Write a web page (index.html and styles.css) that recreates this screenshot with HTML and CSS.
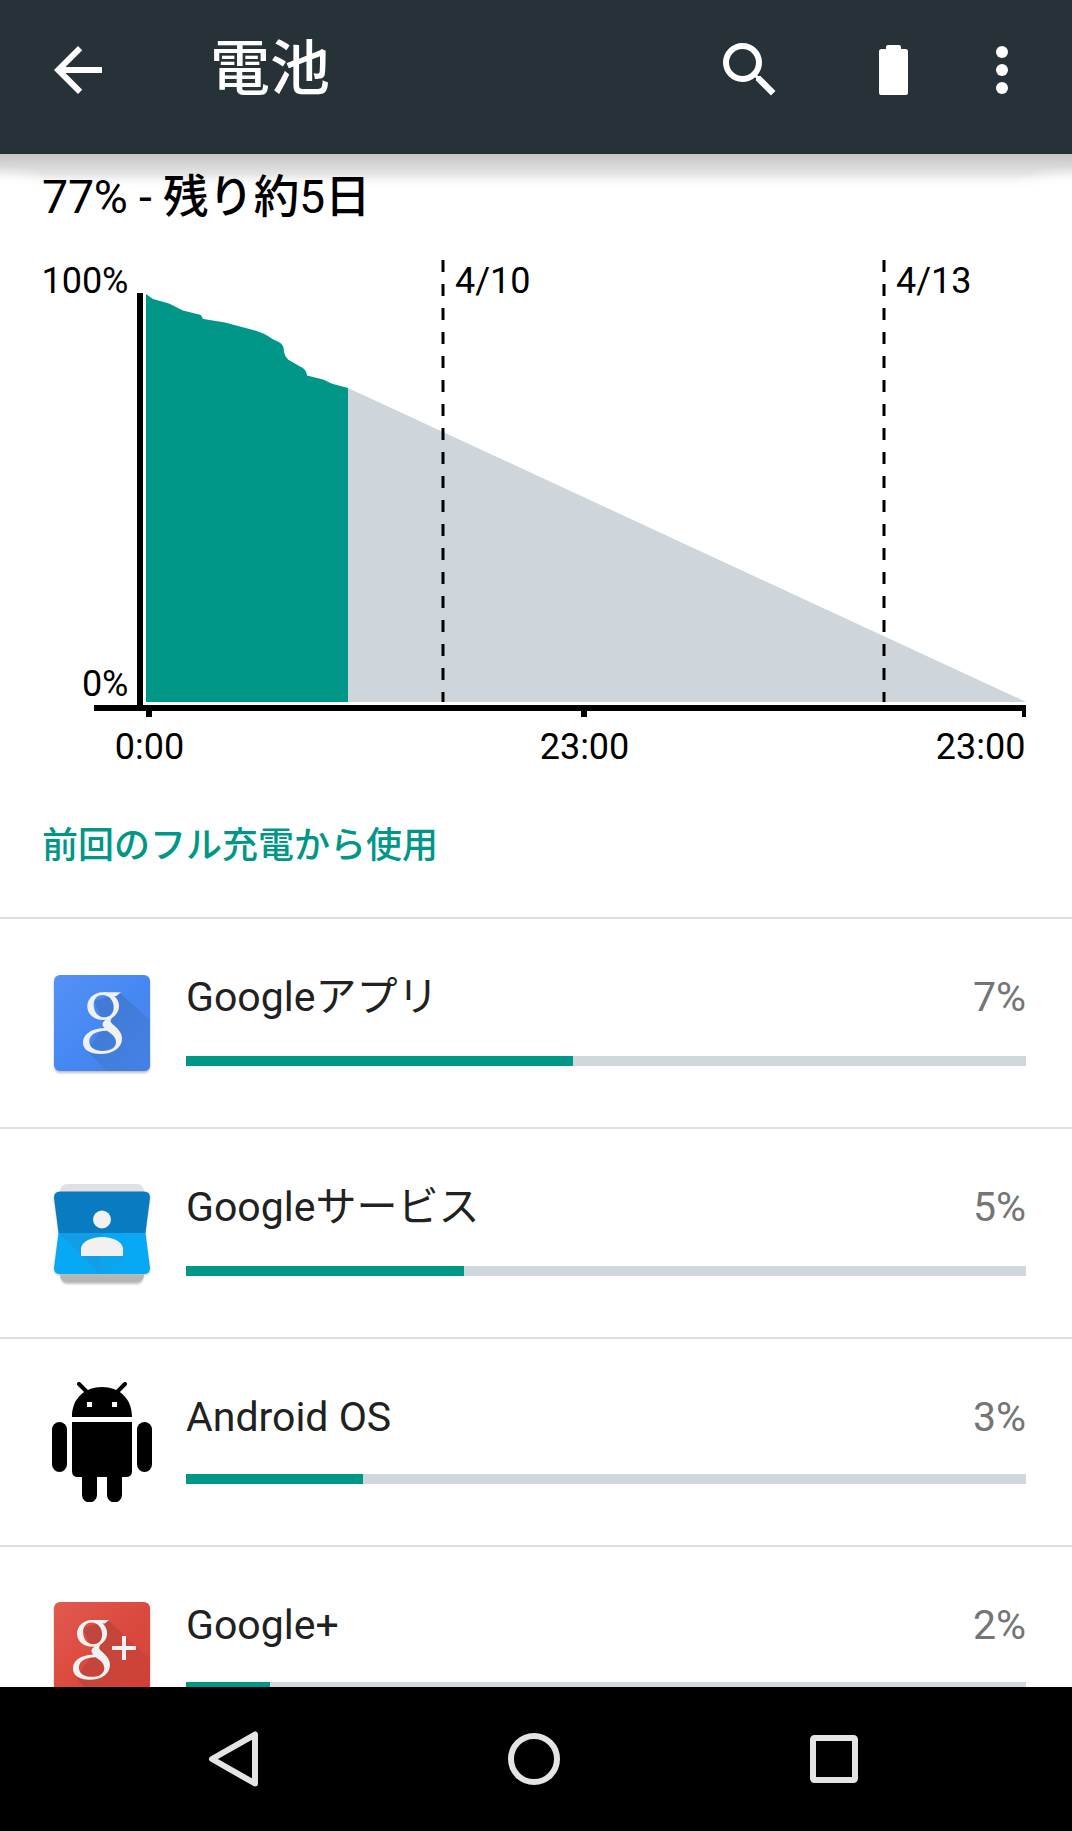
FILE: index.html
```html
<!DOCTYPE html>
<html lang="ja">
<head>
<meta charset="utf-8">
<title>電池</title>
<link rel="stylesheet" href="styles.css">
</head>
<body>
<div class="screen">
  <header class="app-bar">
    <svg class="icon back" viewBox="0 0 24 24"><path d="M20 11H7.83l5.59-5.59L12 4l-8 8 8 8 1.41-1.41L7.83 13H20z"/></svg>
    <h1 class="title">電池</h1>
    <svg class="icon search" viewBox="0 0 24 24"><path d="M15.5 14h-.79l-.28-.27A6.47 6.47 0 0 0 16 9.500 6.500 6.500 0 1 0 9.500 16c1.610 0 3.090-.59 4.230-1.570l.27.28v.79l5 4.990L20.490 19zm-6 0a4.500 4.500 0 1 1 0-9 4.500 4.500 0 0 1 0 9z"/></svg>
    <svg class="icon battery" viewBox="0 0 72 72"><path d="M45.500 15H44v-2a2 2 0 0 0-2-2H31a2 2 0 0 0-2 2v2h-4.500a2.500 2.500 0 0 0-2.500 2.500V59a2 2 0 0 0 2 2h25a2 2 0 0 0 2-2V17.500a2.500 2.500 0 0 0-2.500-2.500z"/></svg>
    <svg class="icon more" viewBox="0 0 24 24"><circle cx="12" cy="6" r="2"/><circle cx="12" cy="12" r="2"/><circle cx="12" cy="18" r="2"/></svg>
  </header>
  <main class="content">
    <p class="summary">77% - <span class="jp">残り約</span>5<span class="jp">日</span></p>
    <svg class="chart" viewBox="0 240 1072 540">
      <path class="projected" d="M348 388L1026 702H348z"/>
      <path class="used" d="M146 294l7 5 16 4.500c5 2 9 5 14 7l17 4.200c2 .5 2 4 3.500 4.300l21.500 3.500 30 8q8 2.500 12 5c4 3 9 5 12.500 7s4.500 5 4.500 9.500q1 5 4 7.500l12 7c5 2 6.500 5 7 9l16 4c4 1.500 6 3 10 4.500L348 388V702H146z"/>
      <path class="axis" d="M137 293h6v412h883v12h-4v-6H587v6h-6v-6H152v6h-6v-6H94v-6h43z"/>
      <path class="day" d="M443 260V702M884 260V702"/>
      <g class="labels">
        <text x="128.500" y="293" text-anchor="end">100%</text>
        <text x="128.500" y="696" text-anchor="end">0%</text>
        <text x="455" y="293">4/10</text>
        <text x="896" y="293">4/13</text>
        <text x="149.500" y="759" text-anchor="middle">0:00</text>
        <text x="584.500" y="759" text-anchor="middle">23:00</text>
        <text x="1025.500" y="759" text-anchor="end">23:00</text>
      </g>
    </svg>
    <h2 class="section">前回のフル充電から使用</h2>
    <ul class="apps">
      <li class="app">
        <svg class="app-icon" viewBox="0 0 120 120">
          <defs>
            <linearGradient id="blue" x2="1" y2="1"><stop stop-color="#5591f5"/><stop offset=".5" stop-color="#4688f4"/><stop offset="1" stop-color="#4481e6"/></linearGradient>
            <linearGradient id="blue-shadow" x2="1" y2="1"><stop offset=".3" stop-color="#417bd6"/><stop offset=".9" stop-color="#4481e6"/></linearGradient>
          </defs>
          <rect class="shade" x="12" y="14" width="96" height="96" rx="6"/>
          <rect x="12" y="12" width="96" height="96" rx="6" fill="url(#blue)"/>
          <path d="M78 30L108 57v45q0 6-6 6H65L45 88 62 62 52 38z" fill="url(#blue-shadow)"/>
          <g id="g" fill="#f1f1f1" fill-rule="evenodd">
            <path d="M61 29.300c9.500 0 16 6 16 13.500S71 57 61.500 57 45.300 51 45.300 43.500 51.500 29.300 61 29.300zM60.500 32c-5.500 0-8.800 4-8.800 10 0 7 4.300 12.300 10.300 12.300 6.300 0 9.700-4 9.700-10C71.700 37.500 67 32 60.500 32z"/>
            <path d="M61 29.300H79L74.500 33H69z"/>
            <path d="M62.500 65C48 65.500 41 72 41 79.500 41 87 48 91 58.500 91 71 91 80 85 80 75.500 80 69 75 65 71 61.500c-3-2.500-3-4-1-6.500l-6 1.500c-4 2.500-4.500 5.500-1.500 8.500zM65 67.700C52 67.700 47.300 73 47.300 78.500 47.300 84.500 53 88 60.500 88 69 88 74 84.500 74 79c0-5-4-8-9-11.300z"/>
          </g>
        </svg>
        <div class="body">
          <div class="line"><span class="name">Googleアプリ</span><span class="pct">7%</span></div>
          <div class="bar"><div class="fill" style="width:46.070%"></div></div>
        </div>
      </li>
      <li class="app">
        <svg class="app-icon" viewBox="0 0 120 120">
          <rect class="shade" x="19" y="15" width="82" height="96" rx="6"/>
          <rect x="18" y="11" width="84" height="50" rx="7" fill="#e1e1e1"/>
          <rect x="18" y="60" width="84" height="49" rx="7" fill="#b5b5b5"/>
          <path class="shade" d="M18 20h84q6 0 6 6l-5 34 5 36q0 6-6 6H18q-6 0-6-6l5-36-5-34q0-6 6-6z"/>
          <path d="M18 18.500h84q6 0 6 6L103.500 60h-87L12 24.500q0-6 6-6z" fill="#087bc1"/>
          <path d="M16.500 60h87l4.500 35q0 6-6 6H18q-6 0-6-6z" fill="#08a9f4"/>
          <path d="M16.500 60H60v41h-2z" fill="#119ee6"/>
          <path d="M58 83h27L62 101h-4z" fill="#0ba4ed"/>
          <circle cx="60" cy="46.500" r="9" fill="#f1f1f1"/>
          <path d="M39 83V76c0-8 12-12 21-12s21 4 21 12v7z" fill="#f1f1f1"/>
        </svg>
        <div class="body">
          <div class="line"><span class="name">Googleサービス</span><span class="pct">5%</span></div>
          <div class="bar"><div class="fill" style="width:33.100%"></div></div>
        </div>
      </li>
      <li class="app compact">
        <svg class="app-icon" viewBox="0 0 120 120">
          <path d="M30 35C30 16 43 5 60 5s30 11 30 30zM30 40h60v49q0 6-6 6H80v18a7.500 7.500 0 0 1-15 0V95H55v18a7.500 7.500 0 0 1-15 0V95h-4q-6 0-6-6z"/>
          <rect x="10" y="40" width="15" height="50" rx="7.500"/>
          <rect x="95" y="40" width="15" height="50" rx="7.500"/>
          <path class="antenna" d="M37 2l9 9M83 2l-9 9"/>
          <path d="M45 20h5v5h-5zM70 20h5v5h-5z" fill="#fff"/>
        </svg>
        <div class="body">
          <div class="line"><span class="name">Android OS</span><span class="pct">3%</span></div>
          <div class="bar"><div class="fill" style="width:21.070%"></div></div>
        </div>
      </li>
      <li class="app compact">
        <svg class="app-icon" viewBox="0 0 120 120">
          <defs>
            <linearGradient id="red" x2="1" y2="1"><stop stop-color="#e2594e"/><stop offset=".5" stop-color="#db4a3f"/><stop offset="1" stop-color="#d64338"/></linearGradient>
            <linearGradient id="red-shadow" x2="1" y2="1"><stop offset=".2" stop-color="#c0463d"/><stop offset=".8" stop-color="#d04237"/></linearGradient>
          </defs>
          <rect class="shade" x="12" y="14" width="96" height="96" rx="6"/>
          <rect x="12" y="12" width="96" height="96" rx="6" fill="url(#red)"/>
          <path d="M67 31l41 38v33q0 6-6 6H54L34 88 52 62 40 38z" fill="url(#red-shadow)"/>
          <use href="#g" transform="translate(-8 1.500) scale(.95 .97)"/>
          <path d="M80 46h4v10h10v4H84v10h-4V60H70v-4h10z" fill="#f1f1f1"/>
        </svg>
        <div class="body">
          <div class="line"><span class="name">Google+</span><span class="pct">2%</span></div>
          <div class="bar"><div class="fill" style="width:10%"></div></div>
        </div>
      </li>
    </ul>
  </main>
  <nav class="nav-bar">
    <svg viewBox="0 0 60 60"><path d="M51 5.500V54.500L8 30z"/></svg>
    <svg viewBox="0 0 60 60"><circle cx="30" cy="30" r="23"/></svg>
    <svg viewBox="0 0 60 60"><rect x="9" y="9" width="42" height="42" rx="1.500"/></svg>
  </nav>
</div>
</body>
</html>
```
FILE: styles.css
```css
* {
  box-sizing: border-box;
  margin: 0;
  padding: 0;
}

body {
  font-family: Roboto, "Noto Sans CJK JP", sans-serif;
  background: #fff;
  color: #000;
}

svg {
  display: block;
  flex: none;
}

.screen {
  display: flex;
  flex-direction: column;
  height: 1831px;
  overflow: hidden;
}

.app-bar {
  display: flex;
  align-items: center;
  flex: none;
  height: 154px;
  padding: 0 34px 14px 42px;
  background: #263238;
  color: #fff;
}

.icon {
  width: 72px;
  height: 72px;
  fill: currentColor;
}

.title {
  flex: 1;
  margin-left: 96px;
  font-size: 60px;
  font-weight: 500;
  line-height: 90px;
}

.battery {
  margin-left: 71px;
}

.more {
  margin-left: 37px;
}

.content {
  display: flex;
  flex-direction: column;
  flex: 1;
  min-height: 0;
  overflow: hidden;
  background:
    radial-gradient(ellipse 60px 20px at 0 32px, #fff 10%, transparent) 0 0 / 60px 32px no-repeat,
    radial-gradient(ellipse 60px 20px at 60px 32px, #fff 10%, transparent) 100% 0 / 60px 32px no-repeat,
    linear-gradient(#c6c6c6, #d0d0d0 7px, #e4e4e4 20px, #f6f6f6 26px, #fff 32px) 0 0 / 100% 32px no-repeat,
    #fff;
}

.summary {
  flex: none;
  height: 86px;
  padding: 9px 42px 0;
  font-size: 46.5px;
  line-height: 68px;
  letter-spacing: -0.2px;
  white-space: nowrap;
}

.summary .jp {
  font-size: 45.5px;
  font-weight: 500;
}

.chart {
  width: 1072px;
  height: 540px;
}

.projected {
  fill: #ced6db;
}

.used {
  fill: #009688;
}

.day {
  fill: none;
  stroke: #000;
  stroke-width: 3;
  stroke-dasharray: 12;
}

.labels {
  font-size: 36px;
}

.section {
  flex: none;
  height: 137px;
  padding: 40px 42px 0;
  color: #009688;
  font-size: 36px;
  font-weight: 500;
  line-height: 52px;
}

.apps {
  list-style: none;
}

.app {
  display: flex;
  height: 210px;
  padding: 44px 46px 0 42px;
  border-top: 2px solid #e0e0e0;
}

.app.compact {
  height: 208px;
}

.compact .app-icon {
  margin-top: -1px;
}

.app-icon {
  width: 120px;
  height: 120px;
}

.shade {
  fill: #bdbdbd;
  filter: blur(1px);
}

.antenna {
  stroke: #000;
  stroke-width: 4;
  stroke-linecap: round;
}

.body {
  flex: 1;
  margin-left: 24px;
}

.line {
  display: flex;
  justify-content: space-between;
  height: 93px;
  color: #212121;
  font-size: 41px;
  line-height: 68px;
}

.compact .line {
  height: 91px;
}

.pct {
  color: #757575;
}

.bar {
  height: 10px;
  background: #cfd8dc;
}

.fill {
  height: 100%;
  background: #009688;
}

.nav-bar {
  display: flex;
  flex: none;
  gap: 240px;
  height: 144px;
  padding: 42px 0 0 204px;
  background: #000;
}

.nav-bar svg {
  width: 60px;
  height: 60px;
  fill: none;
  stroke: #e4e4e4;
  stroke-width: 6;
  stroke-linejoin: round;
}
```
